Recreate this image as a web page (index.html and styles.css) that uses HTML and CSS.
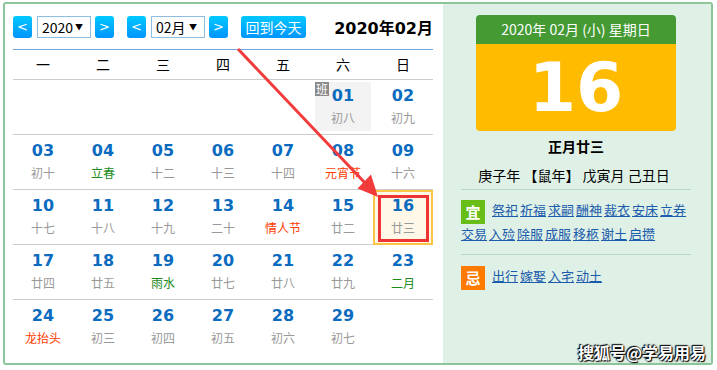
FILE: index.html
```html
<!DOCTYPE html>
<html>
<head>
	<meta charset="utf-8">
	<title>万年历 2020年02月</title>
	<link rel="stylesheet" href="styles.css">
</head>

<body>
	<div class="page">
		<div class="cal">
			<div class="head">
				<span class="btn">&lt;</span>
				<span class="pick">2020<i>▼</i></span>
				<span class="btn">&gt;</span>
				<span class="btn btn-gap">&lt;</span>
				<span class="pick">02月<i>▼</i></span>
				<span class="btn">&gt;</span>
				<span class="btn-today">回到今天</span>
				<span class="title">2020年02月</span>
			</div>

			<div class="weekdays">
				<span>一</span><span>二</span><span>三</span><span>四</span><span>五</span><span>六</span><span>日</span>
			</div>

			<div class="week">
				<div></div><div></div><div></div><div></div><div></div>
				<div class="day work"><em class="badge">班</em><b>01</b><span>初八</span></div>
				<div class="day"><b>02</b><span>初九</span></div>
			</div>

			<div class="week">
				<div class="day"><b>03</b><span>初十</span></div>
				<div class="day"><b>04</b><span class="term">立春</span></div>
				<div class="day"><b>05</b><span>十二</span></div>
				<div class="day"><b>06</b><span>十三</span></div>
				<div class="day"><b>07</b><span>十四</span></div>
				<div class="day"><b>08</b><span class="fest">元宵节</span></div>
				<div class="day"><b>09</b><span>十六</span></div>
			</div>

			<div class="week">
				<div class="day"><b>10</b><span>十七</span></div>
				<div class="day"><b>11</b><span>十八</span></div>
				<div class="day"><b>12</b><span>十九</span></div>
				<div class="day"><b>13</b><span>二十</span></div>
				<div class="day"><b>14</b><span class="fest">情人节</span></div>
				<div class="day"><b>15</b><span>廿二</span></div>
				<div class="day today"><b>16</b><span>廿三</span></div>
			</div>

			<div class="week">
				<div class="day"><b>17</b><span>廿四</span></div>
				<div class="day"><b>18</b><span>廿五</span></div>
				<div class="day"><b>19</b><span class="term">雨水</span></div>
				<div class="day"><b>20</b><span>廿七</span></div>
				<div class="day"><b>21</b><span>廿八</span></div>
				<div class="day"><b>22</b><span>廿九</span></div>
				<div class="day"><b>23</b><span class="term">二月</span></div>
			</div>

			<div class="week last">
				<div class="day"><b>24</b><span class="fest">龙抬头</span></div>
				<div class="day"><b>25</b><span>初三</span></div>
				<div class="day"><b>26</b><span>初四</span></div>
				<div class="day"><b>27</b><span>初五</span></div>
				<div class="day"><b>28</b><span>初六</span></div>
				<div class="day"><b>29</b><span>初七</span></div>
				<div></div>
			</div>
		</div>

		<div class="info">
			<div class="date-card">
				<div class="date-top">2020年 02月 (小) 星期日</div>
				<div class="date-big">16</div>
			</div>
			<div class="lunar">正月廿三</div>
			<div class="ganzhi">庚子年 【鼠年】 戊寅月 己丑日</div>

			<div class="yiji">
				<span class="tag tag-yi">宜</span>
				<a href="#">祭祀</a><a href="#">祈福</a><a href="#">求嗣</a><a href="#">酬神</a><a href="#">裁衣</a><a href="#">安床</a><a href="#">立券</a><a href="#">交易</a><a href="#">入殓</a><a href="#">除服</a><a href="#">成服</a><a href="#">移柩</a><a href="#">谢土</a><a href="#">启攒</a>
			</div>

			<div class="yiji ji">
				<span class="tag tag-ji">忌</span>
				<a href="#">出行</a><a href="#">嫁娶</a><a href="#">入宅</a><a href="#">动土</a>
			</div>
		</div>
	</div>

	<!-- red arrow and box drawn on the screenshot -->
	<svg class="marks" width="717" height="370" viewBox="0 0 717 370">
		<line x1="238" y1="49" x2="366" y2="184" stroke="#f23b3b" stroke-width="3"/>
		<polygon points="378,197 357.5,188.5 371,174.5" fill="#f23b3b"/>
		<rect x="379.5" y="196.5" width="48" height="44" fill="none" stroke="#ee3333" stroke-width="3"/>
	</svg>

	<div class="watermark">搜狐号@学易用易</div>
</body>
</html>
```

FILE: styles.css
```css
body {
	margin: 0;
	background: #fff;
	font-family: "Noto Sans CJK SC", "DejaVu Sans", sans-serif;
	color: #000;
	position: relative;
	width: 717px;
	height: 370px;
	overflow: hidden;
}

.page {
	margin: 2px 0 0 3px;
	width: 706px;
	height: 359px;
	border: 2px solid #8cc59a;
	border-radius: 3px;
	display: flex;
}

/* left: month grid */
.cal {
	width: 420px;
	padding: 0 10px 0 8px;
}

.head {
	height: 44px;
	display: flex;
	align-items: center;
	border-bottom: 1px solid #6fa7dd;
	padding-top: 1px;
}

.btn {
	width: 19px;
	height: 22px;
	line-height: 21px;
	text-align: center;
	color: #fff;
	font-size: 13px;
	font-family: "DejaVu Sans", sans-serif;
	border-radius: 3px;
	background: linear-gradient(#00c8ff, #0095fd);
}

.btn-gap {
	margin-left: 13px;
}

.pick {
	width: 48px;
	height: 20px;
	line-height: 20px;
	margin: 0 4px 0 5px;
	padding-left: 4px;
	border: 1px solid #8dbde0;
	font-size: 14px;
	display: flex;
	align-items: center;
	justify-content: space-between;
}

.pick i {
	font-style: normal;
	font-size: 8px;
	margin-right: 7px;
}

.btn-today {
	margin-left: 13px;
	width: 65px;
	height: 22px;
	line-height: 22px;
	text-align: center;
	color: #fff;
	font-size: 14px;
	border-radius: 3px;
	background: linear-gradient(#00c8ff, #0095fd);
}

.title {
	margin-left: auto;
	font-size: 16px;
	font-weight: bold;
	font-family: "DejaVu Sans", "Noto Sans CJK SC", sans-serif;
}

.weekdays {
	display: grid;
	grid-template-columns: repeat(7, 60px);
	height: 29px;
	line-height: 29px;
	border-bottom: 1px solid #cccccc;
	text-align: center;
	font-size: 14px;
}

.week {
	display: grid;
	grid-template-columns: repeat(7, 60px);
	height: 54px;
	border-bottom: 1px solid #cccccc;
}

.week.last {
	border-bottom: none;
}

.day {
	position: relative;
	text-align: center;
	padding-top: 6px;
}

.day b {
	display: block;
	height: 20px;
	line-height: 20px;
	font-family: "DejaVu Sans", sans-serif;
	font-size: 16px;
	color: #0b6cbf;
}

.day span {
	display: block;
	margin-top: 2px;
	line-height: 20px;
	font-size: 12px;
	color: #999;
}

.day .term {
	color: #1d8a1d;
}

.day .fest {
	color: #ff3c00;
}

.day.work {
	margin: 2px 2px 3px;
	padding-top: 4px;
	background: #f3f3f3;
}

.badge {
	position: absolute;
	top: 0;
	left: 0;
	width: 14px;
	height: 14px;
	line-height: 14px;
	font-size: 12px;
	font-style: normal;
	color: #fff;
	background: #8a8a8a;
}

.day.today {
	background: #fff8e8;
	box-shadow: inset 0 0 0 2px #fcc645;
	margin-bottom: -1px;
}

/* right: selected day */
.info {
	width: 230px;
	padding: 0 20px 0 18px;
	background: #dff1e6;
}

.date-card {
	width: 200px;
	margin: 11px 0 0 15px;
	border-radius: 4px;
	overflow: hidden;
	text-align: center;
	color: #fff;
}

.date-top {
	height: 29px;
	line-height: 29px;
	font-size: 14px;
	background: #459a34;
}

.date-big {
	height: 87px;
	line-height: 88px;
	font-size: 68px;
	font-weight: bold;
	font-family: "DejaVu Sans", sans-serif;
	background: #ffbb00;
}

.lunar {
	line-height: 30px;
	text-align: center;
	font-size: 14px;
	font-weight: bold;
}

.ganzhi {
	line-height: 28px;
	text-align: center;
	font-size: 14px;
	border-bottom: 1px solid #b6d8c0;
	padding-right: 4px;
}

.yiji {
	padding: 8px 0 8px;
	line-height: 24px;
	font-size: 13px;
	border-bottom: 1px solid #b6d8c0;
}

.yiji a {
	display: inline-block;
	margin-right: 2px;
	color: #1b5bab;
	text-decoration: underline;
}

.yiji.ji {
	padding-top: 9px;
	border-bottom: none;
}

.tag {
	float: left;
	width: 24px;
	height: 24px;
	line-height: 24px;
	margin: 2px 7px -2px 0;
	text-align: center;
	color: #fff;
	font-size: 15px;
	font-weight: bold;
}

.tag-yi {
	background: #68be16;
}

.tag-ji {
	background: #ff7a00;
}

.marks {
	position: absolute;
	left: 0;
	top: 0;
	pointer-events: none;
}

.watermark {
	position: absolute;
	left: 578px;
	top: 341px;
	font-size: 16px;
	font-weight: bold;
	color: #fff;
	line-height: 22px;
	text-shadow: 0 0 2px #000, 1px 1px 1px #000, -1px -1px 1px #000;
}
```
